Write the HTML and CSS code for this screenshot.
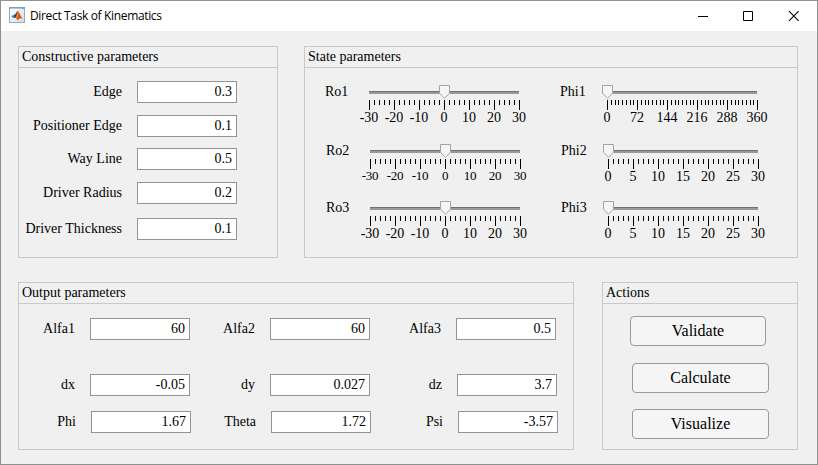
FILE: index.html
```html
<!DOCTYPE html>
<html lang="en">
<head>
<meta charset="utf-8">
<title>Direct Task of Kinematics</title>
<link rel="stylesheet" href="styles.css">
</head>
<body>
<svg class="defs" width="0" height="0" aria-hidden="true">
  <defs>
    <symbol id="ticks-fifths" viewBox="0 0 151 10">
      <path d="M0 2.5H151" stroke="#000" stroke-width="5" stroke-dasharray="1 4"/>
      <path d="M0 5H151" stroke="#000" stroke-width="10" stroke-dasharray="1 24"/>
    </symbol>
    <symbol id="ticks-degrees" viewBox="0 0 151 10">
      <path d="M0 2.5H151" stroke="#000" stroke-width="5" stroke-dasharray="1 3 1 3 1 2 1 3 1 3 1 3 1 2 1 3"/>
      <path d="M0 5H151" stroke="#000" stroke-width="10" stroke-dasharray="1 29"/>
    </symbol>
    <symbol id="thumb" viewBox="0 0 11 14">
      <path d="M.5 .5H10.5V8.3L5.5 13.2L.5 8.3Z" fill="#f5f5f5" stroke="#a3a3a3"/>
    </symbol>
  </defs>
</svg>
<div class="window">
  <header class="titlebar">
    <svg class="app-icon" width="16" height="16" viewBox="0 0 16 16">
      <defs>
        <linearGradient id="paper" x1="0" y1="0" x2="1" y2="1"><stop offset="0" stop-color="#fff"/><stop offset="1" stop-color="#d3dbe3"/></linearGradient>
        <linearGradient id="flame" x1="0" y1="0" x2="1" y2="0"><stop offset="0" stop-color="#7b2414"/><stop offset=".45" stop-color="#e2591b"/><stop offset="1" stop-color="#b93812"/></linearGradient>
      </defs>
      <rect x=".5" y=".5" width="15" height="15" fill="url(#paper)" stroke="#a0a9b2"/>
      <path d="M0 0H16V2H0Z" fill="#7e9db8"/>
      <path d="M1 1H13V2H1Z" fill="#a9c6df"/>
      <path d="M2 9.3L5.2 7.8L6.7 9.1L4.6 11Z" fill="#3f8fc4"/>
      <path d="M5.2 7.8C6.8 7.2 7.2 5 8.6 3.9L8.4 7.6L6.5 10.5L4.6 11Z" fill="#24507e"/>
      <path d="M8.7 3.7C10.3 4.5 11.3 9.7 14 11.8C12 10.9 10.7 11 8.5 13.4C8 11.7 7.2 10.7 5.6 10.9C7.4 9.4 7.8 6.4 8.7 3.7Z" fill="url(#flame)"/>
      <path d="M8.7 4C9.4 6.2 9 9.5 8.2 11.6C7.7 11 7.2 10.8 6.6 10.7C8 9 8.2 6.4 8.7 4Z" fill="#f28a23"/>
    </svg>
    <h1 class="title">Direct Task of Kinematics</h1>
    <svg class="controls" width="104" height="12" viewBox="0 0 104 12" fill="none" stroke="#000">
      <path d="M1 6.5H11"/>
      <path d="M46.5 1.5H55.5V10.5H46.5Z"/>
      <path d="M92 1.2L101.6 10.8M101.6 1.2L92 10.8" stroke-width="1.1"/>
    </svg>
  </header>
  <main class="content">
    <section class="panel constructive">
      <h2>Constructive parameters</h2>
      <div class="form">
        <label>Edge</label><div class="field">0.3</div>
        <label>Positioner Edge</label><div class="field">0.1</div>
        <label>Way Line</label><div class="field">0.5</div>
        <label>Driver Radius</label><div class="field">0.2</div>
        <label>Driver Thickness</label><div class="field">0.1</div>
      </div>
    </section>
    <section class="panel state">
      <h2>State parameters</h2>
      <div class="sliders">
        <div class="control">
          <label>Ro1</label>
          <div class="slider centered">
            <div class="track"><svg class="thumb" width="11" height="14"><use href="#thumb"/></svg></div>
            <svg class="ticks" width="151" height="10"><use href="#ticks-fifths"/></svg>
            <div class="scale"><span>-30</span><span>-20</span><span>-10</span><span>0</span><span>10</span><span>20</span><span>30</span></div>
          </div>
        </div>
        <div class="control phi">
          <label>Phi1</label>
          <div class="slider">
            <div class="track"><svg class="thumb" width="11" height="14"><use href="#thumb"/></svg></div>
            <svg class="ticks" width="151" height="10"><use href="#ticks-degrees"/></svg>
            <div class="scale wide"><span>0</span><span>72</span><span>144</span><span>216</span><span>288</span><span>360</span></div>
          </div>
        </div>
        <div class="control inset">
          <label>Ro2</label>
          <div class="slider centered">
            <div class="track"><svg class="thumb" width="11" height="14"><use href="#thumb"/></svg></div>
            <svg class="ticks" width="151" height="10"><use href="#ticks-fifths"/></svg>
            <div class="scale small"><span>-30</span><span>-20</span><span>-10</span><span>0</span><span>10</span><span>20</span><span>30</span></div>
          </div>
        </div>
        <div class="control phi inset">
          <label>Phi2</label>
          <div class="slider">
            <div class="track"><svg class="thumb" width="11" height="14"><use href="#thumb"/></svg></div>
            <svg class="ticks" width="151" height="10"><use href="#ticks-fifths"/></svg>
            <div class="scale"><span>0</span><span>5</span><span>10</span><span>15</span><span>20</span><span>25</span><span>30</span></div>
          </div>
        </div>
        <div class="control inset">
          <label>Ro3</label>
          <div class="slider centered">
            <div class="track"><svg class="thumb" width="11" height="14"><use href="#thumb"/></svg></div>
            <svg class="ticks" width="151" height="10"><use href="#ticks-fifths"/></svg>
            <div class="scale"><span>-30</span><span>-20</span><span>-10</span><span>0</span><span>10</span><span>20</span><span>30</span></div>
          </div>
        </div>
        <div class="control phi inset">
          <label>Phi3</label>
          <div class="slider">
            <div class="track"><svg class="thumb" width="11" height="14"><use href="#thumb"/></svg></div>
            <svg class="ticks" width="151" height="10"><use href="#ticks-fifths"/></svg>
            <div class="scale"><span>0</span><span>5</span><span>10</span><span>15</span><span>20</span><span>25</span><span>30</span></div>
          </div>
        </div>
      </div>
    </section>
    <section class="panel output">
      <h2>Output parameters</h2>
      <div class="results">
        <div class="row angles">
          <label>Alfa1</label><div class="field">60</div>
          <label>Alfa2</label><div class="field">60</div>
          <label>Alfa3</label><div class="field">0.5</div>
        </div>
        <div class="row offsets">
          <label>dx</label><div class="field">-0.05</div>
          <label>dy</label><div class="field">0.027</div>
          <label>dz</label><div class="field">3.7</div>
        </div>
        <div class="row rotation">
          <label>Phi</label><div class="field">1.67</div>
          <label>Theta</label><div class="field">1.72</div>
          <label>Psi</label><div class="field">-3.57</div>
        </div>
      </div>
    </section>
    <section class="panel actions">
      <h2>Actions</h2>
      <div class="buttons">
        <button class="validate">Validate</button>
        <button class="calculate">Calculate</button>
        <button class="visualize">Visualize</button>
      </div>
    </section>
  </main>
</div>
</body>
</html>
```
FILE: styles.css
```css
* { box-sizing: border-box; }
body { margin: 0; font: 14px/16px "Liberation Serif", "Times New Roman", serif; color: #000; }
svg { display: block; }
.defs { position: absolute; }
.window { width: 818px; height: 465px; border: 1px solid #919191; background: #f0f0f0; overflow: hidden; }

.titlebar { display: flex; align-items: center; height: 30px; padding: 0 16px 0 8px; background: #fff; }
.app-icon { margin-bottom: 2px; }
.title { margin: 0 auto 0 5px; font: 400 12px/16px "Open Sans", "Noto Sans", sans-serif; letter-spacing: -0.35px; white-space: nowrap; }

.content { display: flex; flex-wrap: wrap; align-content: flex-start; padding: 15px 0 0 17px; }
.panel { border: 1px solid #c9c9c9; }
.panel h2 { height: 21px; margin: 0; padding-left: 3px; border-bottom: 1px solid #c9c9c9; font-size: 14px; font-weight: 400; line-height: 20px; }
.constructive { width: 260px; height: 212px; margin-right: 26px; }
.state { width: 494px; height: 212px; }
.output { width: 556px; height: 168px; margin: 24px 28px 0 0; }
.actions { width: 196px; height: 168px; margin-top: 24px; }

label { white-space: nowrap; }
.field { width: 100px; height: 22px; padding-right: 4px; border: 1px solid #949494; background: #fff; line-height: 20px; text-align: right; }
.form { display: grid; grid-template-columns: 103px 100px; grid-template-rows: 34px 33px 34px 36px 22px; column-gap: 15px; padding-top: 13px; }
.form label { line-height: 22px; text-align: right; }

.sliders { display: grid; grid-template-columns: 235px 1fr; grid-template-rows: 59px 57px 57px; padding: 17px 0 0 20px; }
.control { display: flex; }
.control label { width: 44px; line-height: 13px; }
.control.phi label { width: 47px; }
.inset { padding-left: 1px; }
.slider { width: 151px; padding-top: 6px; }
.track { position: relative; width: 150px; height: 3px; border-top: 1px solid #707070; background: #999; }
.thumb { position: absolute; left: -5px; top: -7px; }
.centered .thumb { left: 70px; }
.ticks { margin-top: 6px; }
.scale { display: grid; grid-template-columns: repeat(7, 25px); margin: 0 0 0 -12.5px; text-align: center; line-height: 16px; }
.scale span { display: flex; justify-content: center; }
.scale.wide { grid-template-columns: repeat(6, 30px); margin-left: -15px; }
.scale.small { margin-top: -1px; font-size: 13px; letter-spacing: -0.3px; }

.results { padding-top: 14px; }
.row { display: grid; column-gap: 15px; }
.row label { line-height: 22px; text-align: right; }
.angles { grid-template-columns: 56px 100px 50px 100px 56px 100px; margin-bottom: 34px; }
.offsets { grid-template-columns: 56px 100px 50px 100px 57px 100px; margin-bottom: 15px; }
.rotation { grid-template-columns: 57px 100px 50px 100px 57px 100px; }

.buttons { display: flex; flex-direction: column; padding: 12px 0 0 27px; }
button { width: 137px; height: 30px; margin: 0 0 16px 2px; padding: 0; border: 1px solid #999; border-radius: 4px; background: #f5f5f5; color: #000; font: 16px/28px "Liberation Serif", "Times New Roman", serif; }
.validate { width: 136px; margin: 0 0 17px; }
```
